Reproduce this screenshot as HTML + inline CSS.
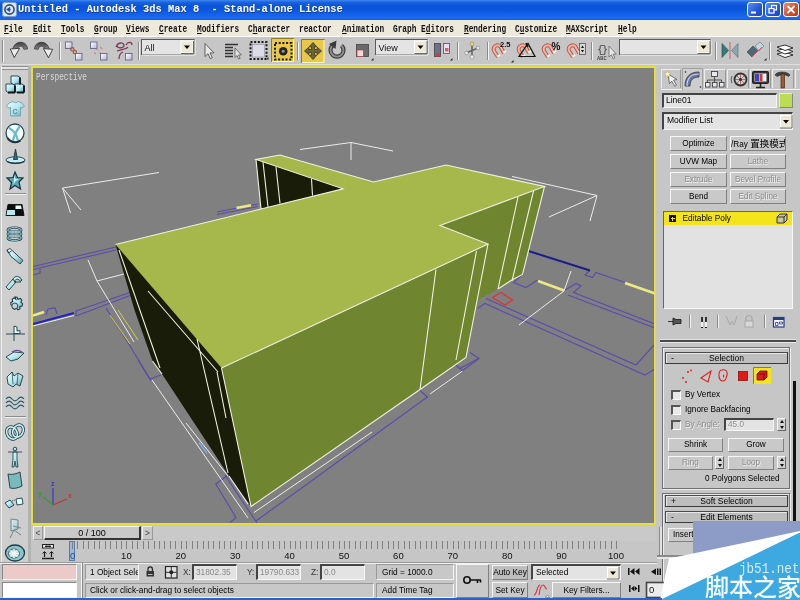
<!DOCTYPE html>
<html>
<head>
<meta charset="utf-8">
<title>Untitled - Autodesk 3ds Max 8</title>
<style>
html,body{margin:0;padding:0;background:#c6c6c6;}
body{width:800px;height:600px;overflow:hidden;position:relative;font-family:"Liberation Sans",sans-serif;font-size:9px;color:#000;}
#app{position:absolute;left:0;top:0;width:800px;height:600px;overflow:hidden;background:#c6c6c6;filter:blur(0.45px);}
.abs{position:absolute;}
/* title bar */
#title{position:absolute;left:0;top:0;width:800px;height:20px;background:linear-gradient(#3c86ee 0%,#1a62e0 12%,#0a52da 30%,#0c56de 50%,#1664ec 75%,#1a6af0 92%,#1458d8 100%);}
#title .txt{position:absolute;left:17.5px;top:3px;font-family:"Liberation Mono",monospace;font-weight:bold;font-size:10.8px;line-height:13px;color:#fff;white-space:pre;transform:scaleX(0.964);transform-origin:0 0;text-shadow:0.5px 0.5px 0 #1a3a90;}
.wb{position:absolute;top:2px;width:16px;height:15px;border-radius:3px;border:1px solid #fff;box-sizing:border-box;background:linear-gradient(135deg,#5b91f0,#2456d6 60%,#1c46bd);}
.wb.close{background:linear-gradient(135deg,#ee8a6a,#d9532c 55%,#b73a16);}
/* menu */
#menu{position:absolute;left:0;top:20px;width:800px;height:16px;background:#edeadb;}
#menu span{position:absolute;top:3.5px;font-family:"Liberation Mono",monospace;font-weight:bold;font-size:10px;line-height:12px;white-space:pre;transform:scaleX(0.78);transform-origin:0 0;color:#111;}
#menu span u{text-decoration:underline;}
/* toolbar */
#tb{position:absolute;left:0;top:36px;width:800px;height:29px;background:#c6c6c6;border-top:1px solid #fff;box-sizing:border-box;}
/* sidebar */
#side{position:absolute;left:0;top:65px;width:31px;height:497px;background:#c8c8c8;}
/* viewport */
#vp{position:absolute;left:31px;top:66px;width:625px;height:459px;background:#e6de3c;}
#vp .in{position:absolute;left:2px;top:2px;right:2px;bottom:2px;background:#808080;overflow:hidden;}
#scene{position:absolute;left:0;top:0;width:800px;height:600px;}
/* generic bevels */
.btn{position:absolute;box-sizing:border-box;background:#c9c9c9;border:1px solid;border-color:#f6f6f6 #808080 #808080 #f6f6f6;text-align:center;white-space:nowrap;overflow:hidden;}
.fld{position:absolute;box-sizing:border-box;background:#e3e3e3;border:1px solid;border-color:#555 #f6f6f6 #f6f6f6 #555;white-space:nowrap;overflow:hidden;}
.t{position:absolute;white-space:nowrap;}
</style>
</head>
<body>
<div id="app">

<!-- ===== TITLE BAR ===== -->
<div id="title">
  <svg class="abs" style="left:2px;top:2px" width="15" height="15" viewBox="0 0 15 15"><rect x="0.5" y="0.5" width="14" height="14" rx="2" fill="#dfe7f3" stroke="#7e9bc8"/><circle cx="7.5" cy="7.5" r="4.6" fill="none" stroke="#27508f" stroke-width="1.6"/><path d="M4.5 7.5h4.2M8 5.4l-2.6 2.1 2.6 2.1" fill="none" stroke="#27508f" stroke-width="1.3"/></svg>
  <div class="txt">Untitled - Autodesk 3ds Max 8  - Stand-alone License</div>
  <div class="wb" style="left:747px"><svg width="14" height="13"><rect x="3" y="8.5" width="5" height="2" fill="#fff"/></svg></div>
  <div class="wb" style="left:765px"><svg width="14" height="13"><rect x="5.5" y="2.5" width="5" height="4.5" fill="none" stroke="#fff" stroke-width="1.2"/><rect x="3" y="5.5" width="5" height="4.5" fill="#2d5fd8" stroke="#fff" stroke-width="1.2"/></svg></div>
  <div class="wb close" style="left:783px"><svg width="14" height="13"><path d="M3.5 3l7 7M10.5 3l-7 7" stroke="#fff" stroke-width="1.8"/></svg></div>
</div>

<!-- ===== MENU BAR ===== -->
<div id="menu">
  <span style="left:4px"><u>F</u>ile</span>
  <span style="left:33px"><u>E</u>dit</span>
  <span style="left:61px"><u>T</u>ools</span>
  <span style="left:94px"><u>G</u>roup</span>
  <span style="left:126px"><u>V</u>iews</span>
  <span style="left:159px"><u>C</u>reate</span>
  <span style="left:197px"><u>M</u>odifiers</span>
  <span style="left:248px">C<u>h</u>aracter</span>
  <span style="left:299px">reactor</span>
  <span style="left:342px"><u>A</u>nimation</span>
  <span style="left:393px">Graph E<u>d</u>itors</span>
  <span style="left:464px"><u>R</u>endering</span>
  <span style="left:515px">C<u>u</u>stomize</span>
  <span style="left:566px"><u>M</u>AXScript</span>
  <span style="left:618px"><u>H</u>elp</span>
</div>

<!-- ===== TOOLBAR ===== -->
<div id="tb">
<!--TB--><svg class="abs" style="left:0;top:-1px" width="800" height="30" viewBox="0 36 800 30">
<defs>
<linearGradient id="gArrow" x1="0" y1="0" x2="0" y2="1"><stop offset="0" stop-color="#3a3a3a"/><stop offset="1" stop-color="#8a8a8a"/></linearGradient>
<linearGradient id="gBox" x1="0" y1="0" x2="1" y2="1"><stop offset="0" stop-color="#fff"/><stop offset="1" stop-color="#b8b8d8"/></linearGradient>
<g id="magnet"><path d="M6 15.500L1.800 9A4 4 0 0 1 8.200 4.800L12 11.500" stroke="#b85848" stroke-width="3.800" fill="none"/><path d="M6 15.500L1.800 9A4 4 0 0 1 8.200 4.800L12 11.500" stroke="#f0b4a4" stroke-width="1.900" fill="none"/><path d="M5 14.200l2.600-1.600 1 1.600-2.600 1.700zM11 10.200l2.600-1.600 1 1.600-2.600 1.700z" fill="#f8f8f8"/></g>
<g id="ddarrow"><rect x="0" y="0" width="12" height="12" fill="#ece9d8" stroke="#fff" stroke-width="1"/><path d="M12.5 0V12.5H0" fill="none" stroke="#666" stroke-width="1"/><path d="M3 4.5h6l-3 3.5z" fill="#000"/></g>
</defs>
<!-- grips & separators -->
<g stroke="#8a8a8a" stroke-width="1"><path d="M2.5 40V62M59.5 42V60M138.5 42V60M297.5 42V60M457.5 42V60M487.5 42V60M591.5 42V60M715.5 42V60M769.5 42V60"/></g>
<g stroke="#f4f4f4" stroke-width="1"><path d="M3.5 40V62M60.5 42V60M139.5 42V60M298.5 42V60M458.5 42V60M488.5 42V60M592.5 42V60M716.5 42V60M770.5 42V60"/></g>
<!-- undo -->
<path d="M27.500 49C27.500 44 23 41.800 19.500 42.300C16 42.800 13.200 45.500 12.800 49.500L17.200 49.500C17.600 47.300 19 46.200 20.600 46.200C22.400 46.200 23.400 47.300 23.800 49.300Z" fill="url(#gArrow)" stroke="#333" stroke-width="0.700"/>
<path d="M10.300 49L19.600 48.300L14.300 57.600Z" fill="#ececec" stroke="#333" stroke-width="0.900"/>
<!-- redo -->
<path d="M34.500 49C34.500 44 39 41.800 42.500 42.300C46 42.800 48.800 45.500 49.200 49.500L44.800 49.500C44.400 47.300 43 46.200 41.400 46.200C39.600 46.200 38.600 47.300 38.200 49.300Z" fill="url(#gArrow)" stroke="#333" stroke-width="0.700"/>
<path d="M52.700 49.300L43.400 48.600L48.500 57.800Z" fill="#ececec" stroke="#333" stroke-width="0.900"/>
<!-- link -->
<g stroke="#5a5a7a" stroke-width="0.8"><rect x="65.500" y="42" width="6.500" height="6.500" fill="url(#gBox)"/><rect x="75.500" y="53.500" width="6.500" height="6.500" fill="url(#gBox)"/></g>
<circle cx="72.300" cy="49.300" r="1.700" fill="none" stroke="#a05848" stroke-width="1.200"/><circle cx="74.800" cy="52" r="1.700" fill="none" stroke="#a05848" stroke-width="1.200"/>
<!-- unlink -->
<g stroke="#5a5a7a" stroke-width="0.8"><rect x="90.500" y="42" width="6.500" height="6.500" fill="url(#gBox)"/><rect x="100.500" y="53.500" width="6.500" height="6.500" fill="url(#gBox)"/></g>
<path d="M96.500 49l1.500 1.500M99.500 52l1 1M100 47.500l2.500 1M94.500 52l1 2.500" stroke="#c87878" stroke-width="1" fill="none"/>
<!-- bind space warp -->
<path d="M116 47c2-5 7-5 8-2s-6 4-7 1M126 45c2-4 6-3 6 0M117 51c4-2 9-1 11-4M119 59c0-4 1-6 4-7M130 53c-1 2-1 4 0 6" stroke="#803858" stroke-width="1.300" fill="none"/>
<rect x="125.500" y="53.500" width="6.500" height="6.500" fill="url(#gBox)" stroke="#5a5a7a" stroke-width="0.8"/>
<!-- All dropdown -->
<rect x="141.500" y="39.500" width="53" height="15" fill="#e4e4e4" stroke="#5a5a5a"/><path d="M142 55H195V39.500" stroke="#fafafa" fill="none"/>
<use href="#ddarrow" x="181" y="41"/>
<text x="144.500" y="51" font-family="'Liberation Sans',sans-serif" font-size="9" fill="#111">All</text>
<!-- select arrow -->
<path d="M205 43.500v13l3-2.800 2.300 5 2-1-2.300-4.800h4z" fill="#e8e8e8" stroke="#555" stroke-width="0.9"/>
<!-- select by name -->
<g stroke="#333" stroke-width="1.4"><path d="M225 44.500h13M225 47.500h8M225 50.500h8M225 53.500h8M225 56.500h8"/></g>
<path d="M235 48v9.500l2-2 1.600 3.500 1.500-0.700-1.600-3.400h2.800z" fill="#e8e8e8" stroke="#555" stroke-width="0.8"/>
<!-- rect region -->
<rect x="252.500" y="44.500" width="12" height="12.500" fill="#dcdce8" stroke="#9090a0" stroke-width="0.600"/><rect x="250.500" y="42" width="16" height="17" fill="none" stroke="#1a1a1a" stroke-width="2" stroke-dasharray="2 1.670"/>
<path d="M266 59.500l2.500 0 0-2.500z" fill="#222"/>
<!-- window/crossing (active) -->
<rect x="271" y="38.500" width="24" height="23.500" fill="#e8c84a"/><path d="M271.500 62V38.500H294" stroke="#8a7a30" fill="none"/><path d="M272 61.500H293.500V39" stroke="#fff8c0" fill="none"/>
<rect x="275" y="43" width="16.500" height="16.500" fill="none" stroke="#1a1a1a" stroke-width="2" stroke-dasharray="2 1.700"/>
<circle cx="283.200" cy="51.300" r="4.300" fill="#222"/><circle cx="283.200" cy="51.300" r="1.500" fill="#9a9a9a"/>
<!-- move (active) -->
<rect x="301" y="39" width="23.500" height="24" fill="#e8c84a"/><path d="M301.500 63V39.500H324.500" stroke="#8a7a30" fill="none"/><path d="M302 62.500H324V40" stroke="#fff8c0" fill="none"/>
<path transform="translate(0.5 1)" d="M312.500 41.500l3.800 4.300h-2.300v2.700h2.700v-2.300l4.300 3.800-4.300 3.800v-2.300h-2.700v2.700h2.300l-3.800 4.300-3.800-4.300h2.300v-2.700h-2.700v2.300l-4.300-3.800 4.300-3.800v2.300h2.700v-2.700h-2.300z" fill="#6a6438" stroke="#3a3420" stroke-width="0.800"/>
<!-- rotate -->
<g transform="translate(674.500 0) scale(-1 1)"><path d="M342 45.500a6.500 6.500 0 1 1-9 0" fill="none" stroke="#3a3a3a" stroke-width="4.200"/><path d="M342 45.500a6.500 6.500 0 1 1-9 0" fill="none" stroke="#909090" stroke-width="1.800"/>
<path d="M338 40.500l7.500 3.500-6.500 5z" fill="#3a3a3a"/></g>
<!-- scale -->
<rect x="356.500" y="44.500" width="12" height="12" fill="#6a6a6a" stroke="#444" stroke-width="0.8"/><rect x="357" y="50" width="6.500" height="6.500" fill="#f4d8d8" stroke="#a04040" stroke-width="0.7"/>
<path d="M371 60.500l2.500 0 0-2.500z" fill="#222"/>
<!-- View dropdown -->
<rect x="375.500" y="39.500" width="52" height="15" fill="#e4e4e4" stroke="#5a5a5a"/><path d="M376 55H428V39.500" stroke="#fafafa" fill="none"/>
<use href="#ddarrow" x="414.500" y="41"/>
<text x="378.500" y="50.500" font-family="'Liberation Sans',sans-serif" font-size="9" fill="#111">View</text>
<!-- pivot flyout -->
<rect x="434.500" y="43.500" width="6" height="13" fill="#70708a" stroke="#444" stroke-width="0.8"/><rect x="443.500" y="43.500" width="6" height="10" fill="#e8e0f0" stroke="#555" stroke-width="0.8"/><rect x="436" y="53" width="3.500" height="3.500" fill="#c04050"/><rect x="445" y="48" width="3.500" height="3.500" fill="#d06070"/>
<path d="M450 60.500l2.500 0 0-2.500z" fill="#222"/>
<!-- select & manipulate -->
<path d="M472 44v12M466 53l12-5" stroke="#666" stroke-width="1.6" fill="none"/><circle cx="472" cy="44" r="2" fill="#e8d860" stroke="#777" stroke-width="0.5"/><circle cx="472" cy="57" r="2" fill="#e8e8e8" stroke="#777" stroke-width="0.5"/><circle cx="466.500" cy="53" r="1.800" fill="#e8e8e8" stroke="#777" stroke-width="0.5"/><circle cx="478" cy="48" r="1.800" fill="#e8e8e8" stroke="#777" stroke-width="0.5"/>
<!-- snaps -->
<use href="#magnet" x="492" y="41.500"/><text x="500" y="47" font-family="'Liberation Sans',sans-serif" font-weight="bold" font-size="7.500" fill="#111">2.5</text>
<path d="M511 62.500l2.500 0 0-2.500z" fill="#222"/>
<use href="#magnet" x="517" y="41.500"/><path d="M519 56.500h16l-7-13z" fill="none" stroke="#111" stroke-width="1.200"/><path d="M526 43l2 4" stroke="#111" stroke-width="1.6"/>
<use href="#magnet" x="542" y="41.500"/><text x="551.500" y="49.500" font-family="'Liberation Sans',sans-serif" font-weight="bold" font-size="10" fill="#111">%</text>
<use href="#magnet" x="567" y="41.500"/><rect x="579.500" y="43.500" width="6" height="11" fill="#d8d8d8" stroke="#555" stroke-width="0.8"/><path d="M581 48h3l-1.500-2.500zM581 50h3l-1.500 2.500z" fill="#111"/>
<!-- named selection sets -->
<text x="597" y="52.500" font-family="'Liberation Mono',monospace" font-size="11" fill="#444" textLength="11">{}</text>
<text x="597" y="59.500" font-family="'Liberation Sans',sans-serif" font-weight="bold" font-size="4.500" fill="#444">ABC</text>
<path d="M609 46v11l2.400-2.200 1.800 4 1.700-0.800-1.800-3.900h3.200z" fill="#e8e8e8" stroke="#666" stroke-width="0.8"/>
<rect x="619.500" y="39.500" width="91" height="15" fill="#e4e4e4" stroke="#5a5a5a"/><path d="M620 55H711V39.500" stroke="#fafafa" fill="none"/>
<use href="#ddarrow" x="697.500" y="41"/>
<!-- mirror -->
<path d="M722 43.500v14l6.500-7z" fill="#3a7a78" stroke="#244" stroke-width="0.6"/><path d="M738 43.500v14l-6.500-7z" fill="#8aa8b0" stroke="#566" stroke-width="0.6"/><path d="M730 42v17" stroke="#d06070" stroke-width="1"/>
<!-- align -->
<path d="M747 52l6-6 5 5-6 6z" fill="#4a6a78" stroke="#344" stroke-width="0.6"/><path d="M755 46l5-4 4 4-5 5z" fill="#c8d8e0" stroke="#667" stroke-width="0.6"/><path d="M752 57l10-10" stroke="#d06070" stroke-width="0.9"/>
<path d="M764 60.500l2.500 0 0-2.500z" fill="#222"/>
<!-- layers -->
<g fill="#fff" stroke="#222" stroke-width="0.9"><path d="M777 54l8-2 8 3-8 2.500z"/><path d="M777 50.500l8-2 8 3-8 2.500z"/><path d="M777 47l8-2 8 3-8 2.500z"/></g>
</svg>
<!--/TB-->
</div>

<div class="abs" style="left:0;top:64px;width:800px;height:1px;background:#dedede"></div>
<!-- ===== SIDEBAR ===== -->
<div id="side">
<!--SIDE--><div class="abs" style="left:1px;top:1px;width:27px;height:496px;background:#cecece;border-left:1px solid #f0f0f0;box-sizing:border-box"></div>
<div class="abs" style="left:28px;top:1px;width:3px;height:496px;background:#b2b2b2"></div>
<div class="abs" style="left:2px;top:1px;width:26px;height:1px;background:#8e8e8e"></div><div class="abs" style="left:2px;top:2px;width:26px;height:2px;background:#e4e4e4"></div><div class="abs" style="left:2px;top:4px;width:26px;height:1px;background:#8e8e8e"></div>
<svg class="abs" style="left:0;top:0" width="31" height="497" viewBox="0 65 31 497">
<defs><linearGradient id="cy" x1="0" y1="0" x2="1" y2="1"><stop offset="0" stop-color="#f2feff"/><stop offset="0.55" stop-color="#b4e4ec"/><stop offset="1" stop-color="#5a9ca8"/></linearGradient></defs>
<g stroke="#1c3c44" stroke-width="0.9" fill="url(#cy)">
<!-- cubes -->
<path d="M11 76h7l2 1.500v7h-7l-2-1.500z"/><path d="M6 84h7l2 1.500v7h-7l-2-1.500z"/><path d="M15 84h7l2 1.500v7h-7l-2-1.500z"/>
<path d="M20 77.500v7M15 85.500v7M24 85.500v7M8 92.500h7M17 92.500h7" fill="none" stroke="#0c1418" stroke-width="1.800"/>
<!-- shirt -->
<path d="M9 103l4-1.500c1 1.500 4 1.500 5 0l4 1.500 2.500 3.500-3 1.800-1-1.300v9h-10v-9l-1 1.300-3-1.800z" stroke="#6aa8b4"/>
<text x="12.500" y="114" font-family="'Liberation Sans',sans-serif" font-size="7" font-weight="bold" fill="#4a98a8" stroke="none">C</text>
<!-- ball -->
<circle cx="15" cy="133" r="9" stroke="#2a4a54" stroke-width="1.300" fill="#f4fcfc"/><path d="M9 128c4 2 8 7 9 13M20 126c-3 4-6 9-7 15" fill="none" stroke="#6ab8c8" stroke-width="2.200"/><path d="M7.500 138a9 9 0 0 0 13 2.500" fill="none" stroke="#1c3038" stroke-width="1.800"/>
<!-- hat/cone -->
<ellipse cx="15.500" cy="160" rx="9.500" ry="3.200" fill="#c4ecf2"/><path d="M13.500 159.500l2-10.500 2 10.500z" fill="#3a6a78"/><path d="M7 161.500c4 2.500 13 2.500 17.500 0" fill="none" stroke="#1c3038" stroke-width="1.300"/>
<!-- star -->
<path d="M15 172l2.500 5.500 5.500 0.500-4 4 1.500 7-5.500-3.500-5 3.500 1.500-6.500-4.500-4.500 6-0.500z" fill="#58a8b8" stroke="#16323a" stroke-width="1.200"/><path d="M14.500 175l1 4 3.500 0.500-3.500 1.500-2 4z" fill="#d8f6f8" stroke="none"/>
<!-- checker -->
<path d="M8 204.500h14l2 11h-18z" fill="#0c0c0c" stroke="#0c0c0c"/><path d="M15.500 205.500h5.500l0.700 3.500h-6.200z" fill="#e8fcfc" stroke="none"/><path d="M7.300 210h7.700v5h-8.500z" fill="#b8e8f0" stroke="none"/>
<!-- spring -->
<g fill="none" stroke="#1c3c48" stroke-width="2.300"><ellipse cx="14.500" cy="230" rx="6.800" ry="2.400"/><ellipse cx="14.500" cy="234" rx="6.800" ry="2.400"/><ellipse cx="14.500" cy="238" rx="6.800" ry="2.400"/></g>
<g fill="none" stroke="#a8e0e8" stroke-width="1"><ellipse cx="14.500" cy="230" rx="6.800" ry="2.400"/><ellipse cx="14.500" cy="234" rx="6.800" ry="2.400"/><ellipse cx="14.500" cy="238" rx="6.800" ry="2.400"/></g>
<!-- tube -->
<path d="M7 250l3-1.500 13 12-3 3.500-9-7.500z" /><path d="M7 250l1.500 3 3-2" fill="none"/>
<!-- clamp -->
<path d="M6 287l7-8 3 3-7 8z"/><path d="M13 279c2-4 7-3 9 1l-1.500 1.500c-2-3-5-3-6 0z"/><path d="M14 282h7" fill="none"/>
<!-- gear -->
<path d="M15 297l2 0.300 1 2 2.300-0.800 1.500 1.700-1 2 1.800 1.500-0.500 2.300-2.200 0.500 0 2.400-2 1-1.500-1.800-2 1.200-1.800-1.400 0.600-2.200-2.200-0.800-0.200-2.300 2-1-0.600-2.300 1.800-1.400 1.800 1.300z" stroke-width="1.100"/><circle cx="14.800" cy="306" r="3" fill="#cecece"/>
<!-- weathervane -->
<path d="M14 341v-8M6 334h19M14 326l3 1v4l3-0.500v3h-6z" fill="#e8fcfc" stroke="#2a4a54" stroke-width="1"/>
<!-- plane -->
<path d="M6 357l8-5 10 1-6 6-7 2z"/><path d="M12 352c3-2 7-2 10 0" fill="none" stroke="#6a4a9a" stroke-width="1.300"/>
<!-- folded -->
<path d="M7 377l5-5 2 4 4-3 5 3-3 10-4-2-3 3-5-3z"/><path d="M12 372l1 12M18 373l-1 11" fill="none" stroke-width="0.700"/>
<!-- waves -->
<g fill="none" stroke="#2a5a68" stroke-width="1.200"><path d="M6 399c2-2.500 4-2.500 6 0s4 2.500 6 0 4-2.500 6 0"/><path d="M6 403c2-2.500 4-2.500 6 0s4 2.500 6 0 4-2.500 6 0"/><path d="M6 407c2-2.500 4-2.500 6 0s4 2.500 6 0 4-2.500 6 0"/></g>
<!-- knot -->
<g fill="none" stroke="#1c3c44" stroke-width="3.200"><ellipse cx="12" cy="433" rx="5" ry="6.500" transform="rotate(-30 12 433)"/><ellipse cx="18" cy="431" rx="5" ry="6.500" transform="rotate(30 18 431)"/></g>
<g fill="none" stroke="#c8f0f4" stroke-width="1.600"><ellipse cx="12" cy="433" rx="5" ry="6.500" transform="rotate(-30 12 433)"/><ellipse cx="18" cy="431" rx="5" ry="6.500" transform="rotate(30 18 431)"/></g>
<!-- biped -->
<circle cx="15" cy="449" r="1.800"/><path d="M8 452h14M13 452h4v7l1 8h-2l-1-6-1 6h-2l1-8z" stroke-width="0.800"/>
<!-- cloth -->
<path d="M8 474c4 1 8 0 12-2l2 14c-4 2-8 3-12 2z" fill="#7ababc"/>
<!-- rigid bodies -->
<path d="M5 503l5-3 4 5-5 3z"/><path d="M16 499l6-1 1 6-6 1z" fill="#e8fcfc"/><path d="M12 501l3-1" fill="none" stroke-dasharray="1 1"/>
<!-- figure -->
<g opacity="0.550"><path d="M11 519l7 1v9l-7 2z"/><path d="M10 538l4-8M14 530l7 5M13 526l8 2" fill="none"/></g>
<!-- wheel -->
<ellipse cx="15" cy="553" rx="9.500" ry="8" stroke-width="1.300" fill="#8ac4cc"/><ellipse cx="14" cy="553.500" rx="5.500" ry="4.500" fill="#cecece" stroke-width="0.700"/><path d="M14 549v9M9 553.500h10M10.500 550.500l7 6M17.500 550.500l-7 6" fill="none" stroke="#e4fbfc" stroke-width="1.400"/>
</g>
<g stroke="#8a8a8a"><path d="M5 193.500H26M5 416.500H26"/></g><g stroke="#f2f2f2"><path d="M5 194.500H26M5 417.500H26"/></g>
</svg>
<!--/SIDE-->
</div>

<!-- ===== VIEWPORT ===== -->
<div id="vp"><div class="in"></div></div>
<svg id="scene" viewBox="0 0 800 600" width="800" height="600">
<!--SCENE--><defs><clipPath id="vpc"><rect x="33" y="68" width="621" height="455"/></clipPath></defs>
<g clip-path="url(#vpc)" fill="none" stroke-linecap="butt">
<!-- ground plan purple lines (behind building) -->
<g stroke="#5846b0" stroke-width="1.150" opacity="0.9">
<path d="M33 266.5L116 247M33 269.5L116 250M33 275L40 273L40 268"/>
<path d="M76 311L130 292.5M76 316L130 295.5M76 311V316"/>
<path d="M46 315L48 309L55 308L57 314"/>
<path d="M106 308L130 346L150 379L161 375"/>
<path d="M138 360L151 381"/>
<path d="M227.500 475.500L215.800 484L236 517.600L230 522.500"/>
<path d="M225 475L257 523"/>
<path d="M256 521L350 453L428 396.500M419.500 390L428 397.500M455 364.500L463 371M459 369L478.500 358.500"/>
<path d="M217 212L258 204M217 214.5L258 206.5"/>
<path d="M590 270L585 275L592.5 277.5L596 272.5L625 282.5"/>
<path d="M523.5 273.5L513.5 282.5L526 287.5L537.5 280"/>
<path d="M563.5 291L576 283.5L581 286L573.5 292.5L655 324"/>
<path d="M568 295L655 328"/>
<path d="M486 298.5L636 365L655 344"/>
<path d="M477.5 308.5L485 303.5L645 375L655 369"/>
<path d="M470 352.5L479 358.5L460 372.5"/>
</g>
<!-- dark blue thick lines -->
<path d="M33 324L74 313" stroke="#2222c8" stroke-width="2"/>
<path d="M528.5 251L590 270.5" stroke="#1c1c8c" stroke-width="2"/>
<!-- yellow segments -->
<g stroke="#ecea86" stroke-width="2.600">
<path d="M236.5 208L251 205.3"/>
<path d="M538 281L564 290.5"/>
<path d="M625 283L655 293.5"/>
<path d="M33 315.5L44 312"/>
</g>
<g stroke="#d8d040" stroke-width="1">
<path d="M110 315L130 344M118 310L138 340"/>
</g>
<!-- white bounding box / helper lines on ground -->
<g stroke="#ececec" stroke-width="1">
<path d="M62.5 188L159 172.5M62.5 188L70.5 213M62.5 188L81 210"/>
<path d="M300 149.5L351 142.5L393 151M351 142.5V160"/>
<path d="M512 176.5L597 195.5L549 217M597 195.5L590 221"/>
<path d="M88 260L97 281L134 342M97 281L124 274"/>
<path d="M33 326L74 315.5"/>
<path d="M152 380L248 518"/>
<path d="M186 423L228 476"/>
<path d="M254 512.500L372 432M430 394L462.500 371"/>
<path d="M571 271L564 291L519 325"/>
</g>
<path d="M199 442.5L207 453.5" stroke="#78a8e8" stroke-width="1.5"/>
<!-- red quad -->
<path d="M492.5 297.5L501 292.5L512.5 300L505 305Z" stroke="#e03030" stroke-width="1.2"/>

<!-- ===== building ===== -->
<!-- top face -->
<path d="M115.5 244.5L261 209L256 159.5L280 155L373.5 182L446 165L544.5 186.5L440 225.5L488 244L221.5 368Z" fill="#a6b84c" stroke="none"/>
<!-- inner dark triangle -->
<path d="M256 159.5L343 188.8L261 209Z" fill="#181c08" stroke="none"/>
<!-- left dark face -->
<path d="M115.5 244.5L221.5 368L251 506.5L229 476L162 374L152.5 361L134.500 310Z" fill="#181c08" stroke="none"/>
<!-- front faces mid green -->
<path d="M221.5 368L488 244L440 225.5L544.5 186.5L522.5 274.5L498 289L478 300L466 357.5L420 389.5L251 506.5Z" fill="#6f8530" stroke="none"/>
<!-- white edges -->
<g stroke="#f0f0e0" stroke-width="1.1">
<path d="M115.5 244.5L261 209L343 188.8L256 159.5L280 155L373.5 182L446 165L544.5 186.5L440 225.5L488 244L221.5 368"/>
<path d="M256 159.5L261 209"/>
<path d="M263 162L268 207M276 167L280 203.5M311.5 179L312.5 195.5"/>
<path d="M221.5 368L251 506.5L420 389.5L466 357.5L488 244"/>
<path d="M544.5 186.5L522.5 274.5L511 280.5L498 289"/>
<path d="M533.5 191L512 281M518 197L498 289"/>
<path d="M476.5 251L456 360M436 269.5L420 389.5"/>
<path d="M119 250L160 368M148 291L218 372M197 339L228 473M217 372L226 418"/>
<path d="M152.5 361L162 374"/>
<path d="M229 476L248 504"/>
</g>
</g>
<!-- Perspective label -->
<text x="36" y="79.5" font-family="'Liberation Mono',monospace" font-size="10" fill="#d8d8d8" textLength="51" lengthAdjust="spacingAndGlyphs">Perspective</text>
<!-- axis tripod -->
<g stroke-width="1.2" fill="none"><path d="M53 505V488" stroke="#3838d0"/><path d="M53 505L67 499" stroke="#d03030"/><path d="M53 505L43 497" stroke="#30a030"/></g>
<g font-family="'Liberation Sans',sans-serif" font-size="7" font-weight="bold"><text x="51" y="486" fill="#3838d0">z</text><text x="68" y="498" fill="#d03030">x</text><text x="38" y="496" fill="#30a030">y</text></g>
<!--/SCENE-->
</svg>

<!-- ===== RIGHT PANEL ===== -->
<div id="rp">
<!--RP--><style>
#rp{position:absolute;left:657px;top:65px;width:143px;height:535px;background:#c6c6c6;font-size:8.2px;}
#rp .btn{height:15px;line-height:13px;font-size:8.2px;}
#rp .dis{color:#8c8c8c;text-shadow:0.6px 0.6px 0 #f4f4f4;}
.roll{position:absolute;left:8px;width:123px;height:12px;box-sizing:border-box;background:#bebebe;border:1px solid;border-color:#4a4a4a #3a3a3a #3a3a3a #4a4a4a;box-shadow:inset 1px 1px 0 #e6e6e6;text-align:center;line-height:10px;font-size:8.5px;}
.roll b{position:absolute;left:5px;top:0;font-weight:normal;}
.cb{position:absolute;width:10px;height:10px;box-sizing:border-box;background:#e8e8e8;border:1px solid;border-color:#555 #fafafa #fafafa #555;border-width:2px 1px 1px 2px;margin-left:-1px;margin-top:-0.5px}
.spin{position:absolute;width:9px;height:13px;box-sizing:border-box;background:#d2d2d2;border:1px solid;border-color:#f4f4f4 #666 #666 #f4f4f4;}
.spin:before{content:"";position:absolute;left:1.500px;top:1px;border:2.500px solid transparent;border-top:0;border-bottom:3px solid #111;}
.spin:after{content:"";position:absolute;left:1.500px;bottom:1px;border:2.500px solid transparent;border-bottom:0;border-top:3px solid #111;}
</style>
<!-- left thin separator line -->

<!-- tabs -->
<svg class="abs" style="left:0;top:0" width="143" height="26" viewBox="657 65 143 26">
<g stroke="#eeeeee" fill="none"><path d="M661.500 88V69.500H680M704.500 88V69.500H725M727.500 88V69.500H748M750.500 88V69.500H770M772.500 88V69.500H793M795.500 88V69.500H800"/></g>
<g stroke="#9a9a9a" fill="none"><path d="M680.500 70V88M725.500 70V88M748.500 70V88M770.500 70V88M793.500 70V88"/></g>
<rect x="682" y="68" width="21" height="22" fill="#cecece"/><path d="M682.500 90V68.500H702.500V90" stroke="#a2a2a2" fill="none"/>
<path d="M661 89.500H682M703 89.500H800" stroke="#f2f2f2"/>
<!-- create -->
<path d="M668 74l9 5.500-3.500 0.700 3 5-1.700 1-3-5-2.300 2.500z" fill="#f4f4f4" stroke="#555" stroke-width="0.8"/><path d="M666 70.500l1 2.500 2.600 0-2 1.700 0.800 2.600-2.400-1.500-2.200 1.500 0.700-2.600-2-1.700 2.500 0z" fill="#fff8b0" stroke="#a8a060" stroke-width="0.4" transform="translate(1.500 0)"/>
<!-- modify -->
<g transform="translate(-3 0)"><path d="M688 86c0-9 5-14 14-14v5c-6 0-9 3-9 9z" fill="#6878a8" stroke="#333" stroke-width="0.8"/><path d="M690 86c0-8 4-12 12-12" fill="none" stroke="#c8d0e8" stroke-width="1.2"/><circle cx="688.500" cy="72" r="0.800" fill="#222"/><circle cx="703.500" cy="87" r="0.800" fill="#222"/></g>
<!-- hierarchy -->
<g transform="translate(-5 0)"><g fill="#e8e8f0" stroke="#444" stroke-width="0.9"><rect x="716.500" y="71.500" width="6" height="5"/><rect x="710.500" y="82.500" width="4.500" height="4.500"/><rect x="717.500" y="82.500" width="4.500" height="4.500"/><rect x="724.500" y="82.500" width="4.500" height="4.500"/></g><path d="M719.500 76.500v3.500M712.500 82.500v-2.500h14v2.500M719.500 80v2.500" fill="none" stroke="#444" stroke-width="0.9"/></g>
<!-- motion -->
<g transform="translate(-2.5 0)"><circle cx="743" cy="79.500" r="6" fill="#d8d0d0" stroke="#333" stroke-width="1.800"/><path d="M743 74v11M737.500 79.500h11M739 75.500l8 8M747 75.500l-8 8" stroke="#a04040" stroke-width="0.7"/><circle cx="743" cy="79.500" r="1.500" fill="#333"/><path d="M734.500 76c-1 2-1 5 0 7" stroke="#555" fill="none"/></g>
<!-- display -->
<g transform="translate(-5 0)"><rect x="757.500" y="71.500" width="16" height="12" rx="1" fill="#333" stroke="#222"/><rect x="759.500" y="73.500" width="12" height="8" fill="#f0f0f8"/><rect x="760" y="74" width="4" height="7" fill="#3848b8"/><rect x="764.500" y="74" width="3" height="7" fill="#d03838"/><path d="M761 87.500h9M765.500 84v3" stroke="#222" stroke-width="1.600"/></g>
<!-- utilities -->
<g transform="translate(-6 0)"><path d="M781 75c2-4 12-4 15 0l-1.500 1.500c-3-2.500-8-2.500-11 0z" fill="#444" stroke="#222" stroke-width="0.6"/><rect x="787" y="74" width="3.500" height="14" fill="#a05838" stroke="#4a2810" stroke-width="0.7"/></g>
</svg>
<!-- name field + color swatch -->
<div class="fld" style="left:5px;top:28px;width:115px;height:15px;border-width:2px 1px 1px 2px;border-color:#444 #f6f6f6 #f6f6f6 #444;line-height:11px;padding-left:2px;font-size:8.5px;">Line01</div>
<div class="abs" style="left:122px;top:28px;width:14px;height:15px;background:#bcdc54;border:1px solid;border-color:#e8e8e8 #888 #888 #e8e8e8;box-sizing:border-box"></div>
<!-- modifier list -->
<div class="fld" style="left:5px;top:47px;width:131px;height:18px;border-width:2px 1px 1px 2px;border-color:#444 #f6f6f6 #f6f6f6 #444;line-height:13px;padding-left:3px;font-size:8.5px;">Modifier List</div>
<svg class="abs" style="left:123px;top:50px" width="13" height="14"><rect x="0.500" y="0.500" width="11" height="12" fill="#ece9d8" stroke="#fff"/><path d="M12 0V13H0" fill="none" stroke="#666"/><path d="M3 5h6l-3 3.500z" fill="#000"/></svg>
<!-- modifier buttons -->
<div class="btn" style="left:13px;top:71px;width:57px;">Optimize</div>
<div class="btn" style="left:73px;top:71px;width:56px;font-family:'Liberation Sans','Noto Sans CJK SC',sans-serif;text-align:left;"><span style="position:absolute;left:0;top:0;white-space:nowrap">/Ray <span style="font-size:9.500px">置换模式</span></span></div>
<div class="btn" style="left:13px;top:89px;width:57px;">UVW Map</div>
<div class="btn dis" style="left:73px;top:89px;width:56px;">Lathe</div>
<div class="btn dis" style="left:13px;top:107px;width:57px;">Extrude</div>
<div class="btn dis" style="left:73px;top:107px;width:56px;">Bevel Profile</div>
<div class="btn" style="left:13px;top:124px;width:57px;">Bend</div>
<div class="btn dis" style="left:73px;top:124px;width:56px;">Edit Spline</div>
<!-- stack -->
<div class="abs" style="left:6px;top:146px;width:130px;height:98px;background:#e2e2e2;border:1px solid;border-color:#666 #f8f8f8 #f8f8f8 #666;box-sizing:border-box"></div>
<div class="abs" style="left:7px;top:147px;width:128px;height:13px;background:#f4e41c;"></div>
<div class="abs" style="left:12px;top:150px;width:7px;height:7px;background:#111;"></div>
<div class="abs" style="left:13.500px;top:153px;width:4px;height:1px;background:#f4e41c;"></div><div class="abs" style="left:15px;top:151.500px;width:1px;height:4px;background:#f4e41c;"></div>
<div class="t" style="left:25.500px;top:148px;line-height:11px;font-size:8.300px;">Editable Poly</div>
<svg class="abs" style="left:119px;top:148px" width="12" height="11"><path d="M1 4l3-3h7v6l-3 3h-7z" fill="#c8c8a0" stroke="#222" stroke-width="0.9"/><path d="M1 4h7v6M8 4l3-3" fill="none" stroke="#222" stroke-width="0.9"/></svg>
<!-- stack tool icons -->
<svg class="abs" style="left:0;top:248px" width="143" height="18" viewBox="657 313 143 18">
<path d="M668 321.500h5M673 318v7l3-1.500h5v-4h-5z" fill="#555" stroke="#222" stroke-width="0.9"/>
<g stroke="#8a8a8a"><path d="M689.500 315V328M717.500 315V328M764.500 315V328"/></g><g stroke="#f2f2f2"><path d="M690.500 315V328M718.500 315V328M765.500 315V328"/></g>
<path d="M702 317v5M706 317v5" stroke="#222" stroke-width="1.800"/><path d="M702 322v5M706 322v5" stroke="#f4f4f4" stroke-width="1.800"/><path d="M701 327.500h2M705 327.500h2" stroke="#222" stroke-width="1"/>
<path d="M726 316l4 9 2-4 2 4 3-9" fill="none" stroke="#a8a8a8" stroke-width="1"/>
<path d="M746 321v-2.500a3 3 0 0 1 6 0v2.500" fill="none" stroke="#a8a8a8" stroke-width="1.100"/><rect x="745" y="321" width="8" height="6" fill="#d8d8d8" stroke="#a8a8a8"/>
<rect x="773.500" y="317.500" width="10.500" height="9.500" fill="#f4f4f4" stroke="#2a3a8a" stroke-width="1.200"/><rect x="773.500" y="317.500" width="10.500" height="2.500" fill="#2a3a8a"/><path d="M775.500 322.500h2.500v3h-2.500zM779.500 322h3v2h-3z" fill="none" stroke="#2a3a8a" stroke-width="0.8"/>
</svg>
<!-- rollout area -->
<div class="abs" style="left:3px;top:274px;width:136px;height:1px;background:#e4e4e4"></div><div class="abs" style="left:3px;top:275px;width:136px;height:2px;background:#4a4a4a"></div>
<div class="abs" style="left:3px;top:277px;width:136px;height:1px;background:#e8e8e8"></div>
<div class="abs" style="left:136px;top:316px;width:3px;height:150px;background:#111"></div>
<div class="abs" style="left:5px;top:282px;width:128px;height:142px;border:1px solid #707070;box-shadow:inset 1px 1px 0 #ececec,1px 1px 0 #ececec;box-sizing:border-box"></div>
<div class="roll" style="top:287px;"><b>-</b>Selection</div>
<!-- sub-object icons -->
<svg class="abs" style="left:20px;top:301px" width="100" height="20" viewBox="677 366 100 20">
<g fill="#e02020"><circle cx="683" cy="378" r="1"/><circle cx="688" cy="372" r="1"/><circle cx="691" cy="370.500" r="0.900"/><circle cx="686" cy="382" r="1"/></g>
<path d="M701 378l10-7-3 11z" fill="none" stroke="#e02020" stroke-width="1.100"/>
<path d="M722 370c4-1 6 2 5 5s-1 6-4 6-4-3-4-6 1-5 3-5zM723 375c1 0 1 2 0 2" fill="none" stroke="#e02020" stroke-width="1.100"/>
<rect x="738.500" y="371.500" width="9" height="9" fill="#e01818" stroke="#901010" stroke-width="0.800"/>
<rect x="753" y="367" width="18" height="17" fill="#f4e41c"/><path d="M753.500 384V367.500H771" stroke="#8a8030" fill="none"/>
<path d="M757 374l3-3h7v6l-3 3h-7z" fill="#e01818" stroke="#601010" stroke-width="0.800"/><path d="M757 374h7v6M764 374l3-3" fill="none" stroke="#601010" stroke-width="0.800"/>
</svg>
<div class="cb" style="left:15px;top:325px"></div><div class="t" style="left:28px;top:324px;line-height:11px">By Vertex</div>
<div class="cb" style="left:15px;top:340px"></div><div class="t" style="left:28px;top:339px;line-height:11px">Ignore Backfacing</div>
<div class="cb" style="left:15px;top:355px;background:#d0d0d0"></div><div class="t dis" style="left:28px;top:354px;line-height:11px">By Angle:</div>
<div class="fld dis" style="left:67px;top:353px;width:50px;height:13px;line-height:10px;padding-left:2px;border-width:2px 1px 1px 2px;border-color:#444 #f6f6f6 #f6f6f6 #444;">45.0</div>
<div class="spin" style="left:120px;top:353px"></div>
<div class="btn" style="left:11px;top:373px;width:55px;height:14px;line-height:12px">Shrink</div>
<div class="btn" style="left:71px;top:373px;width:56px;height:14px;line-height:12px">Grow</div>
<div class="btn dis" style="left:11px;top:391px;width:45px;height:14px;line-height:12px">Ring</div>
<div class="spin" style="left:58px;top:391px"></div>
<div class="btn dis" style="left:71px;top:391px;width:46px;height:14px;line-height:12px">Loop</div>
<div class="spin" style="left:120px;top:391px"></div>
<div class="t" style="left:48px;top:408px;line-height:11px">0 Polygons Selected</div>
<div class="roll" style="top:430px;"><b>+</b>Soft Selection</div>
<div class="roll" style="top:446px;"><b>-</b>Edit Elements</div>
<div class="abs" style="left:5px;top:428px;width:128px;height:112px;border:1px solid #707070;box-shadow:inset 1px 1px 0 #ececec,1px 1px 0 #ececec;box-sizing:border-box;"></div>
<div class="btn" style="left:11px;top:463px;width:55px;height:14px;line-height:12px;text-align:left;padding-left:4px">Insert Vertex</div>
<!--/RP-->
</div>

<!-- ===== BOTTOM ===== -->
<div id="bot">
<!--BOT-->
<style>
#bot{position:absolute;left:0;top:525px;width:800px;height:75px;font-size:8.3px;}
#bot .btn{font-size:8.3px;}
</style>
<!-- time slider -->
<div class="abs" style="left:32px;top:1px;width:624px;height:15px;background:#c9c9c9;"></div>
<div class="btn" style="left:33px;top:1px;width:10px;height:14px;line-height:12px;border-color:#eee #999 #999 #eee;color:#444">&lt;</div>
<div class="btn" style="left:44px;top:1px;width:97px;height:14px;line-height:12px;border-color:#f4f4f4 #333 #333 #f4f4f4;border-width:1px 2px 2px 1px;font-size:9px;">0 / 100</div>
<div class="btn" style="left:142px;top:1px;width:11px;height:14px;line-height:12px;border-color:#eee #999 #999 #eee;color:#444">&gt;</div>
<!-- track bar -->
<svg class="abs" style="left:0;top:0" width="800" height="75" viewBox="0 525 800 75">
<path d="M0 562.500H657" stroke="#9a9a9a"/><path d="M0 563.500H657" stroke="#f2f2f2"/>
<!-- mini curve editor icon -->
<g stroke="#222" fill="none" stroke-width="1"><rect x="42.500" y="544.500" width="11" height="3.500" fill="#e8e8e8"/><path d="M45 546.300h6" stroke-width="1.400"/><path d="M42 558.500h12M44.500 552v5M51.500 552v5" stroke-width="1.300"/><path d="M42.500 553.500l2-2 2 2M49.500 553.500l2-2 2 2" stroke-width="1"/></g>
<rect x="69.500" y="541.500" width="5" height="19" fill="#9cb8dc" stroke="#5a7aa8"/>
<path d="M72.5 541V549M77.5 541V549M83.5 541V549M88.5 541V549M94.5 541V549M99.5 541V549M105.5 541V549M110.5 541V549M116.5 541V549M121.5 541V549M126.5 541V549M132.5 541V549M137.5 541V549M143.5 541V549M148.5 541V549M154.5 541V549M159.5 541V549M164.5 541V549M170.5 541V549M175.5 541V549M181.5 541V549M186.5 541V549M192.5 541V549M197.5 541V549M203.5 541V549M208.5 541V549M213.5 541V549M219.5 541V549M224.5 541V549M230.5 541V549M235.5 541V549M241.5 541V549M246.5 541V549M252.5 541V549M257.5 541V549M262.5 541V549M268.5 541V549M273.5 541V549M279.5 541V549M284.5 541V549M290.5 541V549M295.5 541V549M300.5 541V549M306.5 541V549M311.5 541V549M317.5 541V549M322.5 541V549M328.5 541V549M333.5 541V549M339.5 541V549M344.5 541V549M349.5 541V549M355.5 541V549M360.5 541V549M366.5 541V549M371.5 541V549M377.5 541V549M382.5 541V549M388.5 541V549M393.5 541V549M398.5 541V549M404.5 541V549M409.5 541V549M415.5 541V549M420.5 541V549M426.5 541V549M431.5 541V549M436.5 541V549M442.5 541V549M447.5 541V549M453.5 541V549M458.5 541V549M464.5 541V549M469.5 541V549M475.5 541V549M480.5 541V549M485.5 541V549M491.5 541V549M496.5 541V549M502.5 541V549M507.5 541V549M513.5 541V549M518.5 541V549M524.5 541V549M529.5 541V549M534.5 541V549M540.5 541V549M545.5 541V549M551.5 541V549M556.5 541V549M562.5 541V549M567.5 541V549M572.5 541V549M578.5 541V549M583.5 541V549M589.5 541V549M594.5 541V549M600.5 541V549M605.5 541V549M611.5 541V549M616.5 541V549" stroke="#808080" stroke-width="1"/>
<g font-family="'Liberation Sans',sans-serif" font-size="9.500" fill="#111"><text x="70.0" y="559" fill="#2a4a8a">0</text><text x="126.4" y="559" text-anchor="middle">10</text><text x="180.8" y="559" text-anchor="middle">20</text><text x="235.2" y="559" text-anchor="middle">30</text><text x="289.6" y="559" text-anchor="middle">40</text><text x="344.0" y="559" text-anchor="middle">50</text><text x="398.4" y="559" text-anchor="middle">60</text><text x="452.8" y="559" text-anchor="middle">70</text><text x="507.2" y="559" text-anchor="middle">80</text><text x="561.6" y="559" text-anchor="middle">90</text><text x="616.0" y="559" text-anchor="middle">100</text></g>
</svg>
<!-- left listener boxes -->
<div class="abs" style="left:2px;top:39px;width:75px;height:16px;background:#eccaca;border:1px solid;border-color:#888 #f8f8f8 #f8f8f8 #888;box-sizing:border-box"></div>
<div class="abs" style="left:2px;top:57px;width:75px;height:16px;background:#fff;border:1px solid;border-color:#888 #f8f8f8 #f8f8f8 #888;box-sizing:border-box"></div>
<div class="abs" style="left:81px;top:38px;width:1px;height:35px;background:#f4f4f4"></div><div class="abs" style="left:82px;top:38px;width:1px;height:35px;background:#8a8a8a"></div>
<!-- status row -->
<div class="fld" style="left:85px;top:39px;width:54px;height:16px;background:#d6d6d6;line-height:14px;padding-left:4px;border-color:#999 #f4f4f4 #f4f4f4 #999;">1 Object Sele</div>
<svg class="abs" style="left:145px;top:41px" width="40" height="14" viewBox="145 566 40 14"><path d="M148 571v-2a2.200 2.200 0 0 1 4.400 0v2" fill="none" stroke="#222" stroke-width="1.200"/><rect x="146.500" y="571" width="7.500" height="5.500" fill="#333"/><path d="M148 574.500h4.500" stroke="#ddd" stroke-width="0.8"/>
<rect x="165.500" y="566.500" width="11.500" height="11.500" fill="#e0e0e0" stroke="#222" stroke-width="1.200"/><path d="M171.300 567v10.500M166 572.300h10.500" stroke="#222" stroke-width="0.9"/><circle cx="171.300" cy="572.300" r="2" fill="#222"/></svg>
<div class="t" style="left:183px;top:42px;line-height:11px;color:#333">X:</div>
<div class="fld" style="left:192px;top:39px;width:45px;height:16px;line-height:12px;padding-left:2px;color:#8a8a8a;border-width:2px 1px 1px 2px;border-color:#444 #f6f6f6 #f6f6f6 #444;">31802.35</div>
<div class="t" style="left:247px;top:42px;line-height:11px;color:#333">Y:</div>
<div class="fld" style="left:256px;top:39px;width:45px;height:16px;line-height:12px;padding-left:2px;color:#8a8a8a;border-width:2px 1px 1px 2px;border-color:#444 #f6f6f6 #f6f6f6 #444;">19790.633</div>
<div class="t" style="left:311px;top:42px;line-height:11px;color:#333">Z:</div>
<div class="fld" style="left:320px;top:39px;width:45px;height:16px;line-height:12px;padding-left:2px;color:#8a8a8a;border-width:2px 1px 1px 2px;border-color:#444 #f6f6f6 #f6f6f6 #444;">0.0</div>
<div class="fld" style="left:376px;top:39px;width:78px;height:16px;background:#c8c8c8;line-height:14px;padding-left:5px;border-color:#999 #f4f4f4 #f4f4f4 #999;">Grid = 1000.0</div>
<div class="fld" style="left:85px;top:58px;width:289px;height:15px;background:#c8c8c8;line-height:13px;padding-left:4px;border-color:#999 #f4f4f4 #f4f4f4 #999;">Click or click-and-drag to select objects</div>
<div class="fld" style="left:376px;top:58px;width:78px;height:15px;background:#c8c8c8;line-height:13px;padding-left:5px;border-color:#999 #f4f4f4 #f4f4f4 #999;">Add Time Tag</div>
<!-- key button -->
<div class="btn" style="left:456px;top:39px;width:33px;height:34px;"><svg width="31" height="32"><circle cx="10" cy="15" r="3.200" fill="none" stroke="#111" stroke-width="1.600"/><path d="M13 15h11M20.500 15v3M23.500 15v2.500" stroke="#111" stroke-width="1.600" fill="none"/></svg></div>
<div class="btn" style="left:492px;top:40px;width:36px;height:15px;line-height:13px;background:#bdbdbd">Auto Key</div>
<div class="btn" style="left:492px;top:57px;width:36px;height:16px;line-height:14px;">Set Key</div>
<div class="fld" style="left:531px;top:39px;width:90px;height:16px;line-height:12px;padding-left:3px;border-width:2px 1px 1px 2px;border-color:#444 #f6f6f6 #f6f6f6 #444;">Selected</div>
<svg class="abs" style="left:607px;top:42px" width="13" height="13"><rect x="0.500" y="0.500" width="11" height="11" fill="#ece9d8" stroke="#fff"/><path d="M12 0V12H0" fill="none" stroke="#666"/><path d="M3 4.500h6l-3 3.500z" fill="#000"/></svg>
<svg class="abs" style="left:532px;top:57px" width="18" height="16"><path d="M2 13c3 0 3-10 6-10M7 13c1-8 2-10 4-10s2 4 4 4" fill="none" stroke="#d03048" stroke-width="1.100"/><path d="M13.500 15.500l2-2.500 2 2.500z" fill="#fff" stroke="#444" stroke-width="0.500"/></svg>
<div class="btn" style="left:552px;top:57px;width:69px;height:16px;line-height:14px;">Key Filters...</div>
<!-- playback controls -->
<svg class="abs" style="left:624px;top:37px" width="60" height="38" viewBox="624 563 60 38"><g fill="#111"><rect x="628" y="569" width="1.500" height="7"/><path d="M634.500 569v7l-4.500-3.500zM639.500 569v7l-4.500-3.500z"/><path d="M656 569.500v6.500l-5-3.200z"/><rect x="657" y="569.500" width="1.500" height="6.500"/><rect x="659.500" y="569.500" width="1.500" height="6.500"/><rect x="629" y="586" width="1.500" height="7"/><rect x="638" y="586" width="1.500" height="7"/><path d="M634 587v5l-3-2.500zM634.500 587v5l3-2.500z"/></g>
<rect x="646.500" y="583.500" width="40" height="15" fill="#ececec" stroke="#444" stroke-width="1.600"/><text x="649" y="594" font-family="'Liberation Sans',sans-serif" font-size="9.500" fill="#111">0</text></svg>
<!--/BOT-->
</div>

<div class="abs" style="left:659px;top:527px;width:1px;height:29px;background:#8a8a8a"></div><div class="abs" style="left:660px;top:527px;width:2px;height:29px;background:#e2e2e2"></div>
<div class="abs" style="left:657px;top:555px;width:143px;height:2px;background:#8a8a8a"></div><div class="abs" style="left:657px;top:557px;width:143px;height:2px;background:#e6e6e6"></div>
<!-- ===== WATERMARK ===== -->
<!--WM-->
<svg class="abs" style="left:640px;top:500px" width="160" height="100" viewBox="640 500 160 100">
<rect x="693" y="521" width="107" height="79" fill="#8c9cc6"/>
<path d="M669 558.500L800 531V600H660Z" fill="#ffffff"/>
<path d="M660 600L800 532.500V600Z" fill="#3ea8e0"/>
<text x="739" y="572.700" font-family="'Liberation Mono','Noto Sans CJK SC',monospace" font-size="15.500" fill="#d0eefc" textLength="60.500" lengthAdjust="spacingAndGlyphs">jb51.net</text>
<text x="705" y="596" font-family="'Liberation Sans','Noto Sans CJK SC',sans-serif" font-size="24" font-weight="500" fill="#f4fbff">脚本之家</text>
</svg>
<div class="abs" style="left:0;top:598px;width:662px;height:2px;background:#2a62c8"></div>
<!--/WM-->

</div>
</body>
</html>
